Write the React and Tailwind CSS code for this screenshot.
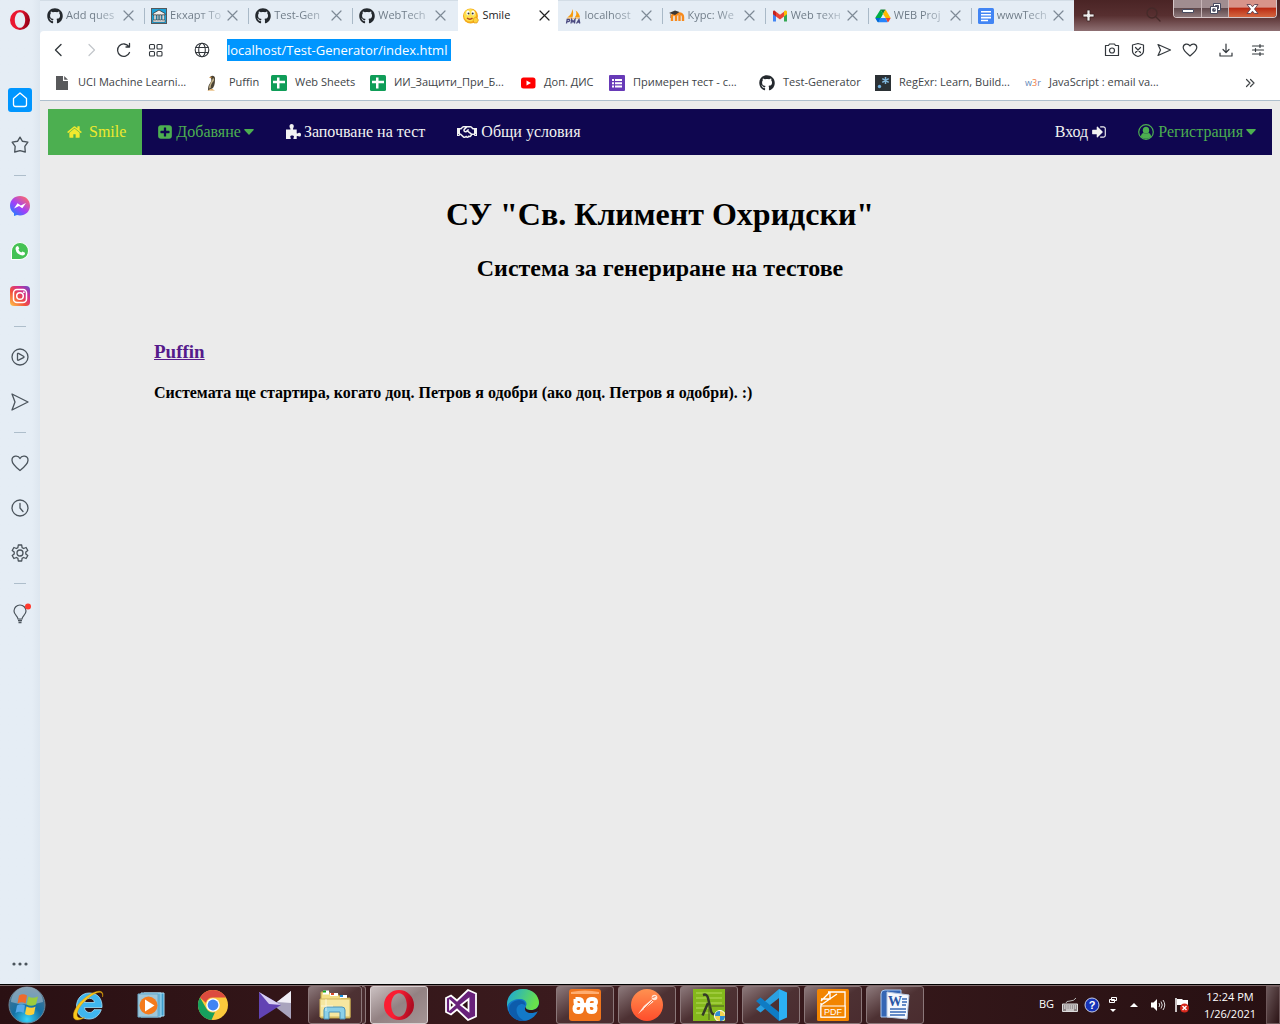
import React from "react";
import { FaGithub, FaRegHandshake } from "react-icons/fa";

/* ---------- helpers ---------- */

function Line({ size = 16, box = 16, w = 1, className = "", children }) {
  return (
    <svg
      width={size}
      height={size}
      viewBox={`0 0 ${box} ${box}`}
      fill="none"
      stroke="currentColor"
      strokeWidth={w}
      strokeLinecap="round"
      strokeLinejoin="round"
      className={"shrink-0 " + className}
      aria-hidden="true"
    >
      {children}
    </svg>
  );
}

function Pic({ w = 16, h = 16, vw = 16, vh = 16, children }) {
  return (
    <svg width={w} height={h} viewBox={`0 0 ${vw} ${vh}`} className="shrink-0" aria-hidden="true">
      {children}
    </svg>
  );
}

/* ---------- favicons ---------- */

const Github = () => <FaGithub size={16} className="shrink-0 text-[#24292e]" aria-hidden="true" />;

const Bank = () => (
  <Pic>
    <rect width="16" height="16" fill="#55595c" />
    <rect x="1" y="1" width="14" height="14" fill="#1ba1d8" />
    <path d="M2 5.500L8 2l6 3.500v1.500H2z" fill="#eee" stroke="#333" strokeWidth=".8" />
    <path d="M3 7h2v5H3zM6.200 7h1.400v5H6.200zM8.600 7H10v5H8.600zM11.200 7h2v5h-2zM2 12h12v2H2z" fill="#f4f4f4" stroke="#444" strokeWidth=".5" />
  </Pic>
);

const Smiley = () => (
  <Pic>
    <circle cx="7.500" cy="8" r="7.500" fill="#f5a91a" />
    <ellipse cx="7" cy="7.300" rx="6" ry="6.300" fill="#fde04e" />
    <ellipse cx="5" cy="5" rx="1.700" ry="2.400" fill="#fff" />
    <ellipse cx="10" cy="5" rx="1.700" ry="2.400" fill="#fff" />
    <circle cx="5.500" cy="5.600" r="1" fill="#333" />
    <circle cx="9.700" cy="5.600" r="1" fill="#333" />
    <path d="M4 10q3 2.500 5.500 0" stroke="#b4441c" strokeWidth="1.400" fill="none" />
    <path d="M11 10l2-1 2.500 3-1.500 3h-3l-1-3z" fill="#fdd23c" stroke="#db8a0c" strokeWidth=".6" />
  </Pic>
);

const Pma = () => (
  <Pic>
    <path d="M7 1C7.500 4 5.500 7.500 2 9.500h5.500C8.500 6 8.500 3 7 1zM10.500 2.500c1.500 2.500 1 5-1 7h5.500c-.5-3-2-5.500-4.500-7z" fill="#f89c0e" />
    <path d="M1.500 10.200h13l-1 .8h-11z" fill="#f4b766" />
    <g fill="none" stroke="#4b4a80" strokeWidth="1.300">
      <path d="M1.500 15.500l.7-4h1.800q1 .1.700 1.200t-1.500 1H2M6 15.500l.7-4 1.300 2.500 2-2.500-.5 4M11.500 15.500l2.500-4 .8 4M12.300 14.200h2" />
    </g>
  </Pic>
);

const Moodle = () => (
  <Pic>
    <path d="M3 13V8.500c0-2.500 4-2.500 4 0V13M7 8.500c0-2.500 1-3 3-3 2.500 0 4 1 4 3.500V13M10.500 7v6" fill="none" stroke="#f78a1d" strokeWidth="2.400" />
    <path d="M0 5l6-2.500L10.500 4 6 7z" fill="#3b3735" />
    <path d="M1.500 5v5" stroke="#8b8078" strokeWidth=".7" />
  </Pic>
);

const Gmail = () => (
  <Pic>
    <path d="M1 4v9.500h3V7.500z" fill="#4285f4" />
    <path d="M15 4v9.500h-3V7.500z" fill="#34a853" />
    <path d="M12 4v4.500l3-2.300V4c0-1.600-1.700-2-3-.9z" fill="#fbbc04" />
    <path d="M1 4v2.200l3 2.300V3.800L3 2.900C2 2.200 1 2.800 1 4z" fill="#c5221f" />
    <path d="M4 3.800v4.700l4 3 4-3V3.800l-4 3z" fill="#ea4335" />
  </Pic>
);

const Drive = () => (
  <Pic>
    <path d="M5.500 1.500h5L8 6z" fill="#188038" />
    <path d="M5.500 1.500L8 6l-4.500 8.300L.3 9.800z" fill="#00ac47" />
    <path d="M10.500 1.500L15.700 10h-5L8 6z" fill="#ffba00" />
    <path d="M.3 10h5l-1.800 4.300L2.500 14z" fill="#0066da" />
    <path d="M5.300 10h5.400l2 4.300H3.400z" fill="#2684fc" />
    <path d="M10.700 10h5l-2.300 4h-.8z" fill="#ea4335" />
  </Pic>
);

const Docs = () => (
  <Pic>
    <rect width="16" height="16" rx="1.500" fill="#4285f4" />
    <path d="M3 3h10v1.600H3zM3 5.900h10v1.600H3zM3 8.800h10v1.600H3zM3 11.700h7v1.600H3z" fill="#fff" />
  </Pic>
);

const Sheets = () => (
  <Pic>
    <rect width="16" height="16" rx="1.500" fill="#0f9d58" />
    <path d="M6 2.500h2.500v3.300H14v2.400H8.500v5.300H6V8.200H2V5.800h4z" fill="#fff" />
  </Pic>
);

const FileIcon = () => (
  <Pic>
    <path d="M2 1h7v5h5v9H2z" fill="#58595b" />
    <path d="M10.200 1L14 4.800h-3.800z" fill="#58595b" />
  </Pic>
);

const PuffinBird = () => (
  <Pic>
    <path d="M5 2c2-2 5-1.500 5 1.500-.1 3 .3 6-2 9.500l-5 2.500c0-4 .5-5.500 2.500-8C6.500 6 7 4 5 2z" fill="#4b4334" />
    <path d="M8 3c1.500.3 1.200 2 .7 3-2 2-3.200 4-3 7l-1.500.5C3.800 9.500 6.500 7 8 3z" fill="#c0b088" />
    <path d="M2 15.500h8l-3-1.500z" fill="#e0a24a" />
    <path d="M3.800 2.700L6.500 1.500v1.700z" fill="#c98b3a" />
  </Pic>
);

const YouTube = () => (
  <Pic>
    <rect x="1" y="2.500" width="14.500" height="11" rx="2.500" fill="#f00" />
    <path d="M6.500 5.500v5L11 8z" fill="#fff" />
  </Pic>
);

const Forms = () => (
  <Pic>
    <rect width="16" height="16" rx="1" fill="#673ab7" />
    <path d="M3 4h2v2H3zM6 4h7v2H6zM3 7.200h2v2H3zM6 7.200h7v2H6zM3 10.400h2v2H3zM6 10.400h7v2H6z" fill="#fff" />
  </Pic>
);

const Regexr = () => (
  <Pic>
    <rect width="16" height="16" fill="#2b3135" />
    <path d="M10.500 2v7M7.300 3.700l6.400 3.600M13.700 3.700l-6.400 3.600" stroke="#80b7dc" strokeWidth="1.500" />
    <circle cx="4.500" cy="11.500" r="1.700" fill="#70b0e0" />
  </Pic>
);

const W3r = () => (
  <span className="w-4 shrink-0 text-[9px] leading-4 text-[#6187b8]" aria-hidden="true">
    w<span className="text-[#f07a45]">3</span>r
  </span>
);

/* ---------- browser tabs ---------- */

const tabs = [
  { icon: Github, label: "Add ques", w: "basis-[104px]" },
  { icon: Bank, label: "Екхарт То", w: "basis-[104px]", sep: true },
  { icon: Github, label: "Test-Gen", w: "basis-[104px]", sep: true },
  { icon: Github, label: "WebTech", w: "basis-[104px]", sep: true },
  { icon: Smiley, label: "Smile", w: "basis-[100px]", active: true },
  { icon: Pma, label: "localhost", w: "basis-[103px]" },
  { icon: Moodle, label: "Курс: We", w: "basis-[103px]", sep: true },
  { icon: Gmail, label: "Web техн", w: "basis-[103px]", sep: true },
  { icon: Drive, label: "WEB Proj", w: "basis-[103px]", sep: true },
  { icon: Docs, label: "wwwTech", w: "basis-[103px]", sep: true },
];

function Tab({ icon: Icon, label, w, sep, active }) {
  return (
    <div
      className={
        "flex h-[31px] min-w-0 grow items-center text-[11px] " +
        w +
        (active ? " ml-0.5 bg-white pr-2 pl-[5px] text-[#222]" : " pr-2.5 text-[#7e8a96]")
      }
    >
      {!active && <span className={"mr-1.5 h-4 w-px shrink-0 " + (sep ? "bg-[#a9b9c7]" : "bg-transparent")} />}
      <Icon />
      <button
        className={
          "ml-[3px] min-w-0 flex-1 text-left whitespace-nowrap " +
          (active ? "" : "bg-linear-to-r from-[#6b7884] from-50% to-[#cbd6e0] bg-clip-text text-transparent")
        }
      >
        {label}
      </button>
      <button aria-label={"Close " + label} className="ml-0.5 shrink-0">
        <Line size={11} box={11} w={1.2}>
          <path d="M1 1l9 9M10 1l-9 9" />
        </Line>
      </button>
    </div>
  );
}

function WindowButtons() {
  return (
    <div className="flex h-[31px] w-[206px] shrink-0 items-start bg-linear-to-b from-[#4a2425] via-[#572f30] to-[#8e7073]">
      <button aria-label="New tab" className="mt-[9px] ml-2">
        <Pic w={13} h={13} vw={13} vh={13}>
          <path d="M5 1h3v4h4v3H8v4H5V8H1V5h4z" fill="#eee" stroke="#3a2222" strokeWidth=".8" />
        </Pic>
      </button>
      <button aria-label="Search tabs" className="mt-1.5 ml-[50px] text-[#452a29]">
        <Line w={1.3}>
          <circle cx="7" cy="7" r="5" />
          <path d="M11 11l4 4" />
        </Line>
      </button>
      <div className="mr-[3px] ml-auto flex h-[18px] w-[104px] overflow-hidden rounded-b-[4px] border border-t-0 border-[#d5c6c8]">
        <button aria-label="Minimize" className="flex w-7 items-center justify-center border-r border-[#c8b6b8] bg-linear-to-b from-[#a08d90] from-45% via-[#60494c] via-50% to-[#8e797c]">
          <Pic w={14} h={12} vw={14} vh={12}>
            <path d="M1.500 6.500h11v3h-11z" fill="#fff" stroke="#484b60" />
          </Pic>
        </button>
        <button aria-label="Restore" className="flex w-[27px] items-center justify-center border-r border-[#c8b6b8] bg-linear-to-b from-[#a08d90] from-45% via-[#60494c] via-50% to-[#8e797c]">
          <Pic w={13} h={13} vw={13} vh={13}>
            <path d="M4.500 1.500h7v7h-7zM6.500 3.500v3h3v-3z" fill="#fff" fillRule="evenodd" stroke="#484b60" />
            <path d="M1.500 4.500h7v7h-7zM3.800 6.800v2.400h2.400V6.800z" fill="#fff" fillRule="evenodd" stroke="#484b60" />
          </Pic>
        </button>
        <button aria-label="Close window" className="flex flex-1 items-center justify-center bg-linear-to-b from-[#d8948a] from-40% via-[#bb2b14] via-50% to-[#d4653f]">
          <Pic w={13} h={12} vw={13} vh={12}>
            <path d="M1 1.500h3.500l2 2.300 2-2.300H12L8.500 6l3.500 4.500H8.500l-2-2.300-2 2.300H1L4.500 6z" fill="#fff" stroke="#5b4150" strokeWidth=".9" />
          </Pic>
        </button>
      </div>
    </div>
  );
}

/* ---------- address bar and bookmarks ---------- */

function Toolbar() {
  return (
    <div className="flex h-[38px] items-center rounded-tl-sm bg-white pr-3.5 pl-3 text-[#33383d]">
      <button aria-label="Back" className="w-8 shrink-0">
        <Line w={1.4}>
          <path d="M9 2.500L3.500 8 9 13.500" />
        </Line>
      </button>
      <button aria-label="Forward" className="w-8 shrink-0 text-[#c2c6ca]">
        <Line w={1.2}>
          <path d="M5 2.500L10.500 8 5 13.500" />
        </Line>
      </button>
      <button aria-label="Reload" className="w-8 shrink-0">
        <Line w={1.3}>
          <path d="M13.500 10.500a6.200 6.200 0 1 1-.6-5.800M13.500 1.500v3.500H10" />
        </Line>
      </button>
      <button aria-label="Speed dial" className="w-12 shrink-0">
        <Line w={1.1}>
          <rect x="1.500" y="2.500" width="5" height="4.500" rx="1" />
          <rect x="9" y="2.500" width="5" height="4.500" rx="1" />
          <rect x="1.500" y="9.500" width="5" height="4.500" rx="1" />
          <rect x="9" y="9.500" width="5" height="4.500" rx="1" />
        </Line>
      </button>
      <button aria-label="Site information" className="w-[31px] shrink-0">
        <Line w={1.1} className="-ml-0.5">
          <circle cx="8" cy="8" r="6.800" />
          <ellipse cx="8" cy="8" rx="3.300" ry="6.800" />
          <path d="M1.800 5.500h12.400M1.800 10.500h12.400" />
        </Line>
      </button>
      <div className="min-w-0 flex-1">
        <input
          aria-label="Address"
          defaultValue="localhost/Test-Generator/index.html"
          className="block h-[22px] w-[224px] bg-[#0096ff] text-[13px] text-white outline-none"
        />
      </div>
      <div className="flex items-center gap-2.5">
        <button aria-label="Snapshot">
          <Line w={1.2}>
            <path d="M1.500 3.500h3l1-1.500h5l1 1.500h3v10h-13z" />
            <circle cx="8" cy="8.500" r="2.500" />
          </Line>
        </button>
        <button aria-label="Ad blocker">
          <Line w={1.2}>
            <path d="M8 1.500l5.500 1.500v6c0 3-2.500 4.500-5.500 5.500-3-1-5.500-2.500-5.500-5.500V3zM5.500 5.500l5 5M10.500 5.500l-5 5" />
          </Line>
        </button>
        <button aria-label="Send to My Flow">
          <Line w={1.2}>
            <path d="M2 2.500L14.500 8 2 13.500 4.500 8z" />
          </Line>
        </button>
        <button aria-label="Add to bookmarks">
          <Line w={1.2}>
            <path d="M8 14C4 10.500 1.200 8.500 1.200 5.500c0-3.800 5-4.700 6.800-1.500 1.800-3.200 6.800-2.300 6.800 1.500 0 3-2.800 5-6.800 8.500z" />
          </Line>
        </button>
        <button aria-label="Downloads" className="ml-2.5">
          <Line w={1.2}>
            <path d="M8 2v8M5 7.500L8 10.500l3-3M2 11v3h12v-3" />
          </Line>
        </button>
        <button aria-label="Easy setup" className="ml-1.5">
          <Line w={1.2}>
            <path d="M2.500 4h11M2.500 8h11M2.500 12h11M10 2.500v3M5.500 6.500v3M10 10.500v3" />
          </Line>
        </button>
      </div>
    </div>
  );
}

const bookmarks = [
  { icon: FileIcon, label: "UCI Machine Learni...", w: "w-[151px]" },
  { icon: PuffinBird, label: "Puffin", w: "w-[66px]" },
  { icon: Sheets, label: "Web Sheets", w: "w-[99px]" },
  { icon: Sheets, label: "ИИ_Защити_При_Б...", w: "w-[150px]" },
  { icon: YouTube, label: "Доп. ДИС", w: "w-[89px]" },
  { icon: Forms, label: "Примерен тест - с...", w: "w-[150px]" },
  { icon: Github, label: "Test-Generator", w: "w-[116px]" },
  { icon: Regexr, label: "RegExr: Learn, Build...", w: "w-[150px]" },
  { icon: W3r, label: "JavaScript : email va...", w: "w-[150px]" },
];

function Bookmarks() {
  return (
    <div className="flex h-8 items-center border-b border-[#aebfcd] bg-white pb-1 pl-3.5 text-[11px] text-[#404447]">
      <nav className="flex min-w-0 flex-1 overflow-hidden" aria-label="Bookmarks">
        {bookmarks.map(({ icon: Icon, label, w }) => (
          <a key={label} href="#" className={"flex shrink-0 items-center gap-2 whitespace-nowrap " + w}>
            <Icon />
            {label}
          </a>
        ))}
      </nav>
      <button aria-label="More bookmarks" className="mr-[22px]">
        <Line w={1.2}>
          <path d="M4.500 4.500L8 8l-3.500 3.500M8.500 4.500L12 8l-3.500 3.500" />
        </Line>
      </button>
    </div>
  );
}

/* ---------- side bar ---------- */

function SideItem({ label, children }) {
  return (
    <button aria-label={label} className="flex h-[45px] w-full items-center justify-center text-[#4b545c]">
      {children}
    </button>
  );
}

const Divider = () => (
  <div className="flex h-4 w-full items-center justify-center">
    <div className="h-px w-3 bg-[#aebecb]" />
  </div>
);

function OperaRing({ size, id, from, to }) {
  return (
    <Pic w={size} h={size} vw={30} vh={30}>
      <defs>
        <linearGradient id={id} x1="0" y1="0" x2="1" y2=".25">
          <stop offset=".5" stopColor={from} />
          <stop offset="1" stopColor={to} />
        </linearGradient>
      </defs>
      <path
        fillRule="evenodd"
        d="M15 0a15 15 0 1 0 0 30a15 15 0 0 0 0-30zM15 3.200c4.600 0 7.800 5.300 7.800 11.800s-3.200 11.800-7.800 11.800S7.200 21.500 7.200 15 10.400 3.200 15 3.200z"
        fill={`url(#${id})`}
      />
    </Pic>
  );
}

function Sidebar() {
  return (
    <aside className="flex w-10 shrink-0 flex-col items-center bg-linear-to-r from-[#e5edf5] from-80% to-[#dde6ef]">
      <button aria-label="Opera menu" className="mt-2.5 mb-[47px]">
        <OperaRing size={20} id="opera-menu" from="#ea1730" to="#9c0018" />
      </button>
      <SideItem label="Speed Dial">
        <span className="flex size-6 items-center justify-center rounded-[3px] bg-[#0096ff] text-white">
          <Line w={1.3}>
            <path d="M1.500 6.500L8 1l6.500 5.500v6q0 2-2 2h-9q-2 0-2-2z" />
          </Line>
        </span>
      </SideItem>
      <SideItem label="Bookmarks">
        <Line size={18} w={1.2}>
          <path d="M8 1l2.200 3.700 4.800.8-2.700 3.800.4 4.900L8 13l-4.700 1.200.4-4.900L1 5.500l4.800-.8z" />
        </Line>
      </SideItem>
      <Divider />
      <SideItem label="Messenger">
        <Pic w={20} h={20} vw={20} vh={20}>
          <defs>
            <linearGradient id="msg" x1="0" y1="1" x2=".8" y2="0">
              <stop offset="0" stopColor="#0090ff" />
              <stop offset=".5" stopColor="#a040fa" />
              <stop offset="1" stopColor="#ff6a68" />
            </linearGradient>
          </defs>
          <path d="M10 0c5.700 0 10 4.200 10 9.700s-4.300 9.700-10 9.700l-3-.4-3 1v-2.700C1.500 15.500 0 12.900 0 9.700 0 4.200 4.300 0 10 0z" fill="url(#msg)" />
          <path d="M4 12.500l3.500-5.300 3.300 2.400L16 7l-3.700 5.300-3.200-2.400z" fill="#fff" />
        </Pic>
      </SideItem>
      <SideItem label="WhatsApp">
        <span className="flex size-[18px] items-center justify-center rounded-full rounded-bl-sm border border-white bg-[#45c254] text-white">
          <Pic w={12} h={12} vw={12} vh={12}>
            <path d="M2.500 1.500L4 1l1.300 2.500-.9 1.200q1 2 2.900 2.800l1.200-1L11 7.700q.2 2.500-2.300 2.800Q2.500 9.800 1.500 4q0-1.700 1-2.500z" fill="#fff" />
          </Pic>
        </span>
      </SideItem>
      <SideItem label="Instagram">
        <Pic w={20} h={20} vw={20} vh={20}>
          <defs>
            <linearGradient id="ig" x1="0" y1="1" x2="1" y2="0">
              <stop offset="0" stopColor="#ffc84a" />
              <stop offset=".4" stopColor="#f2503c" />
              <stop offset=".7" stopColor="#cf2e92" />
              <stop offset="1" stopColor="#5b4fd0" />
            </linearGradient>
          </defs>
          <rect width="20" height="20" rx="4" fill="url(#ig)" />
          <rect x="3.500" y="3.500" width="13" height="13" rx="3.500" fill="none" stroke="#fff" strokeWidth="1.500" />
          <circle cx="10" cy="10" r="3.300" fill="none" stroke="#fff" strokeWidth="1.500" />
          <circle cx="13.900" cy="6.200" r=".9" fill="#fff" />
        </Pic>
      </SideItem>
      <Divider />
      <SideItem label="Player">
        <Line size={18} box={18} w={1.3}>
          <circle cx="9" cy="9" r="8" />
          <path d="M6.500 6q0-1 1-.6l5 2.800q1 .8 0 1.500l-5 2.500q-1 .4-1-.6z" />
        </Line>
      </SideItem>
      <SideItem label="My Flow">
        <Line size={18} box={18} w={1.3}>
          <path d="M1 1L17 9 1 17 4 9z" />
        </Line>
      </SideItem>
      <Divider />
      <SideItem label="Favorites">
        <Line size={18} box={18} w={1.3}>
          <path d="M9 16.500C4 12.500 1 9.500 1 6.200c0-4.700 6.200-5.500 8-1.600 1.800-3.900 8-3.100 8 1.600 0 3.300-3 6.300-8 10.300z" />
        </Line>
      </SideItem>
      <SideItem label="History">
        <Line size={18} box={18} w={1.3}>
          <circle cx="9" cy="9" r="8" />
          <path d="M9 4.500V9l3 3.500" />
        </Line>
      </SideItem>
      <SideItem label="Settings">
        <Line size={18} box={18} w={1.3}>
          <path d="M7.300 1h3.400l.4 2.600 1.500.9 2.500-1 1.700 3-2 1.600v1.800l2 1.600-1.700 3-2.500-1-1.500.9-.4 2.600H7.300l-.4-2.600-1.500-.9-2.500 1-1.700-3 2-1.600V8.100l-2-1.600 1.700-3 2.500 1 1.500-.9z" />
          <circle cx="9" cy="9" r="3" />
        </Line>
      </SideItem>
      <Divider />
      <SideItem label="Tips">
        <Pic w={24} h={22} vw={24} vh={22}>
          <g fill="none" stroke="#4b545c" strokeWidth="1.200">
            <path d="M10 16c0-3-4-4-4-8a6 6 0 0 1 12 0c0 4-4 5-4 8z" />
            <path d="M10 17.500h4M10.500 19.500h3" strokeWidth="1.500" />
          </g>
          <circle cx="20" cy="3.500" r="3" fill="#ff3a2e" />
        </Pic>
      </SideItem>
      <div className="mt-auto pt-4">
        <button aria-label="Sidebar setup" className="flex h-10 w-full items-center justify-center">
          <Pic w={18} h={4} vw={18} vh={4}>
            <g fill="#4b545c">
              <circle cx="3" cy="2" r="1.600" />
              <circle cx="9" cy="2" r="1.600" />
              <circle cx="15" cy="2" r="1.600" />
            </g>
          </Pic>
        </button>
      </div>
    </aside>
  );
}

/* ---------- page ---------- */

function Glyph({ d, w = 16 }) {
  return (
    <svg width={w} height={16} viewBox="0 0 1792 1792" fill="currentColor" aria-hidden="true">
      <path d={d} />
    </svg>
  );
}

const HOME =
  "M1472 992v480q0 26-19 45t-45 19h-384v-384h-256v384h-384q-26 0-45-19t-19-45v-480q0-1 .5-3t.5-3l575-474 575 474q1 2 1 6zm223-69l-62 74q-8 9-21 11h-3q-13 0-21-7l-692-577-692 577q-12 8-24 7-13-2-21-11l-62-74q-8-10-7-23.500t11-21.500l719-599q32-26 76-26t76 26l244 204v-195q0-14 9-23t23-9h192q14 0 23 9t9 23v408l219 182q10 8 11 21.500t-7 23.500z";
const PLUS =
  "M1408 960v-128q0-26-19-45t-45-19h-320v-320q0-26-19-45t-45-19h-128q-26 0-45 19t-19 45v320h-320q-26 0-45 19t-19 45v128q0 26 19 45t45 19h320v320q0 26 19 45t45 19h128q26 0 45-19t19-45v-320h320q26 0 45-19t19-45zm256-544v960q0 119-84.500 203.500t-203.500 84.500h-960q-119 0-203.500-84.500t-84.500-203.500v-960q0-119 84.500-203.500t203.500-84.500h960q119 0 203.500 84.500t84.500 203.500z";
const SIGN_IN =
  "M1312 896q0 26-19 45l-544 544q-19 19-45 19t-45-19-19-45v-288h-448q-26 0-45-19t-19-45v-384q0-26 19-45t45-19h448v-288q0-26 19-45t45-19 45 19l544 544q19 19 19 45zm352-352v704q0 119-84.500 203.500t-203.500 84.500h-320q-13 0-22.500-9.500t-9.500-22.500q-1-4-1-20t-.5-26.500 3-23.500 10-19.500 20.500-6.500h320q66 0 113-47t47-113v-704q0-66-47-113t-113-47h-312l-11.500-1-11.500-3-8-5.500-7-9-2-13.500q-1-4-1-20t-.5-26.500 3-23.500 10-19.500 20.500-6.500h320q119 0 203.500 84.500t84.500 203.500z";

const Puzzle = () => (
  <svg width="15" height="16" viewBox="0 0 15 16" fill="currentColor" className="-mr-px" aria-hidden="true">
    <path d="M0 5.500h4.300C5 4.700 3.500 3.800 3.500 2.200c0-2.900 4.300-2.900 4.300 0 0 1.600-1.300 2.500-.6 3.300h3.500v3.700c.9.800 1.700-.4 2.800-.4 2 0 2 3.700 0 3.700-1.100 0-1.900-1-2.800-.3V15H7.600c-.7-.7.400-1.600.4-2.300 0-1.700-3.800-1.700-3.800 0 0 .7 1.100 1.600.4 2.300H0z" />
  </svg>
);

const UserCircle = () => (
  <svg width="16" height="16" viewBox="0 0 16 16" fill="currentColor" aria-hidden="true">
    <circle cx="8" cy="8" r="7.300" fill="none" stroke="currentColor" strokeWidth="1.200" />
    <ellipse cx="8" cy="6.300" rx="3.200" ry="3.500" />
    <path d="M2.800 12.500c.5-2.500 1.500-3.500 3-3.500 1.300 1 3.100 1 4.400 0 1.500 0 2.500 1 3 3.500-3 2.900-7.400 2.900-10.400 0z" />
  </svg>
);

const Caret = () => (
  <svg width="10" height="6" viewBox="0 0 10 6" fill="currentColor" className="-ml-px" aria-hidden="true">
    <path d="M.8 0h8.400q.8.200.5 1L5.500 5.500q-.5.400-1 0L.3 1Q0 .2.800 0z" />
  </svg>
);

function PageNav() {
  const item = "flex h-[46px] items-center gap-1 px-4 whitespace-nowrap ";
  return (
    <nav className="flex flex-wrap bg-[#0f0650] text-[16px] text-[#f2f2f2]">
      <a href="#" className={item + "bg-[#4caf50] text-[#f0e92e]"}>
        <span className="flex w-[21px] justify-center">
          <Glyph d={HOME} w={17} />
        </span>
        Smile
      </a>
      <button className={item + "text-[#4caf50]"}>
        <span className="-mx-px flex">
          <Glyph d={PLUS} />
        </span>
        Добавяне
        <Caret />
      </button>
      <a href="#" className={item}>
        <Puzzle />
        Започване на тест
      </a>
      <a href="#" className={item}>
        <FaRegHandshake size={20} aria-hidden="true" />
        Общи условия
      </a>
      <div className="ml-auto flex">
        <a href="#" className={item}>
          Вход
          <span className="-mx-px flex">
            <Glyph d={SIGN_IN} />
          </span>
        </a>
        <button className={item + "text-[#4caf50]"}>
          <UserCircle />
          Регистрация
          <Caret />
        </button>
      </div>
    </nav>
  );
}

function Page() {
  return (
    <main className="flex-1 bg-[#ebebeb] p-2 font-['Liberation_Serif',serif] text-black">
      <PageNav />
      <header className="pt-[39px] text-center font-bold">
        <h1 className="text-[32px] leading-10">СУ "Св. Климент Охридски"</h1>
        <h2 className="mt-5 text-[24px] leading-7">Система за генериране на тестове</h2>
      </header>
      <section className="mt-[58px] ml-[106px] font-bold">
        <h3 className="text-[19px] leading-6">
          <a href="#" className="text-[#551a8b] underline">
            Puffin
          </a>
        </h3>
        <h4 className="mt-[19px] text-[16px] leading-5">
          Системата ще стартира, когато доц. Петров я одобри (ако доц. Петров я одобри). :)
        </h4>
      </section>
    </main>
  );
}

/* ---------- task bar ---------- */

const IE = () => (
  <Pic w={32} h={34} vw={32} vh={34}>
    <path d="M29 19.500H11.500c.5 6 7.500 6.500 9.500 2.200h7.300C26 28 21.500 31 16 31 8.500 31 3.500 26 3.500 18.500S8.500 5 16.500 5 29.500 10.500 29 19.500zM11.500 14.500h10c-.8-5.500-9-5.700-10 0z" fill="#3fb5ee" stroke="#a5e2fb" strokeWidth=".8" />
    <path d="M29.500 9c2-7-4.500-7.500-13.500-2C6 13-3 26 1.500 31c2 2 7 .5 10-1.500-4.500 1.200-7.500.5-7.500-3C4 17 23 2 28 4.500c1.500.8 1.800 2.500 1.500 4.500z" fill="#f9c81c" stroke="#d89808" strokeWidth=".5" />
  </Pic>
);

const MediaPlayer = () => (
  <Pic w={30} h={28} vw={30} vh={28}>
    <path d="M8 2h20v23H8z" fill="#3f9ccb" stroke="#a7dbf2" />
    <path d="M5 2h20v24H5z" fill="#63b4dc" stroke="#a7dbf2" />
    <path d="M2 3h20v23H2z" fill="#9fc6d8" stroke="#6aa8c8" />
    <circle cx="12.500" cy="14.500" r="9" fill="#f47a1c" />
    <path d="M9 8.500v12l9.500-6z" fill="#fff" />
  </Pic>
);

const Chrome = () => (
  <Pic w={30} h={30} vw={30} vh={30}>
    <circle cx="15" cy="15" r="15" fill="#fbc93c" />
    <path d="M15 0a15 15 0 0 1 13 7.500H15a7.500 7.500 0 0 0-7.200 5.200L2 7.500A15 15 0 0 1 15 0z" fill="#dc4b3e" />
    <path d="M2 7.500l6.500 11.300A7.500 7.500 0 0 0 17 22.200L13.500 30A15 15 0 0 1 2 7.500z" fill="#17a05d" />
    <circle cx="15" cy="15" r="6.800" fill="#fff" />
    <circle cx="15" cy="15" r="5.400" fill="#4285f4" />
  </Pic>
);

const Km = () => (
  <Pic w={32} h={28} vw={32} vh={28}>
    <path d="M32 0v28L14 14z" fill="#a9a4bd" />
    <path d="M32 0v12L18 11z" fill="#f0eef5" />
    <path d="M0 1l22 13L0 28z" fill="#6243b3" />
    <path d="M0 1l22 13-12-1z" fill="#d9d0f2" />
  </Pic>
);

const Explorer = () => (
  <Pic w={34} h={31} vw={34} vh={31}>
    <path d="M3 3h8l2 3h8l2 3h9v20H3z" fill="#f3de85" stroke="#bb9f45" />
    <path d="M5 1.500h6v4H5zM12 4h8v3h-8zM22 6h7v3h-7z" fill="#fff" />
    <path d="M5 1.500h3v2H5z" fill="#19a51b" />
    <path d="M13 4h3v2h-3z" fill="#d94a28" />
    <path d="M22 6h3v2h-3z" fill="#1590dd" />
    <path d="M2 10h30v18H2z" fill="#f6e7a0" stroke="#d0b45b" />
    <path d="M6 30v-9q0-3 3-3h15q3 0 3 3v9h-5v-7H11v7z" fill="#8bd0e8" stroke="#4a93bb" />
    <path d="M8 10v12M3 17h12" stroke="#fff" opacity=".6" />
  </Pic>
);

const OperaBig = () => <OperaRing size={30} id="opera-task" from="#fa1d32" to="#b00d22" />;

const VisualStudio = () => (
  <Pic w={32} h={32} vw={32} vh={32}>
    <path d="M23 1l8 3.500v23L23 31 12 20.500l-6 5L1 23V9l5-2.500 6 5z" fill="#68217a" stroke="#fff" strokeWidth="1.800" />
    <path d="M5 12l4.500 4L5 20zM23.500 10v12L16 16z" fill="#2d1216" stroke="#fff" strokeWidth="1.800" />
  </Pic>
);

const Edge = () => (
  <Pic w={32} h={32} vw={32} vh={32}>
    <defs>
      <linearGradient id="edg" x1="0" y1="0" x2="1" y2=".3">
        <stop offset="0" stopColor="#18a5df" />
        <stop offset="1" stopColor="#68e14b" />
      </linearGradient>
    </defs>
    <circle cx="16" cy="16" r="16" fill="#1379c9" />
    <path d="M0 16C0 6 7 0 16 0c10 0 16 7 16 13.500 0 5-4 7.500-8 7.500-4.500 0-6-2-5-4 2-4-2-7-6-7C7 10 1 13 0 18z" fill="url(#edg)" />
    <path d="M18.500 17c-2-4-9-2-9 4 0 5 4 10 9 10.700C8 33.500 2 26 2 20c0-8 12-12 16-6z" fill="#0d5cab" />
    <path d="M18.500 17c-2.500 6 4 9.500 13 5l1-3v-6c-1 6-4 8-8.500 8s-6-2-5.500-4z" fill="#301619" />
  </Pic>
);

const Xampp = () => (
  <Pic w={32} h={32} vw={32} vh={32}>
    <rect width="32" height="32" rx="3" fill="#f0741c" />
    <path d="M2 3q14-3 28 0v2H2z" fill="#ffad70" />
    <g fill="none" stroke="#fff" strokeWidth="4">
      <path d="M6.500 10H9q4 0 4 3t3 3 3-3 4-3q4 0 4 3t-4 3H9" />
      <path d="M6.500 10v3q0 3 3 3-4 0-4 3.500t4 3.500q3.500 0 3.500-3.500T16 16t3 3.500 3.500 3.500q4 0 4-3.500t-4-3.500" />
    </g>
  </Pic>
);

const Postman = () => (
  <Pic w={32} h={32} vw={32} vh={32}>
    <defs>
      <linearGradient id="pm" x1="0" y1="0" x2="0" y2="1">
        <stop offset="0" stopColor="#ff9150" />
        <stop offset="1" stopColor="#ff4d2b" />
      </linearGradient>
    </defs>
    <circle cx="16" cy="16" r="16" fill="url(#pm)" />
    <circle cx="23.500" cy="8.500" r="2.800" fill="#ffe6d8" />
    <path d="M20.500 10.500l2 2.300-8 6-7.500 6.200 5.800-8z" fill="#ffe8dc" />
    <path d="M22 11l-9 9M21.500 8.500l3-1" stroke="#f26b3a" />
  </Pic>
);

const Lambda = () => (
  <Pic w={32} h={32} vw={32} vh={32}>
    <rect width="32" height="32" fill="#84b81c" />
    <path d="M3 4h26M3 9h26M3 14h26M3 19h14M3 24h14" stroke="#a5d046" strokeWidth="1.500" />
    <path d="M10 6q4-1.500 5 3l3 13q1 4 4 3M15 14L9.500 26.500" fill="none" stroke="#333a28" strokeWidth="2.500" />
    <path d="M16 31V17h15" fill="none" stroke="#4c5b25" />
    <circle cx="27" cy="27" r="5.500" fill="#f3d552" stroke="#fff" />
    <path d="M27 22v5h-5q0-5 5-5zM27 27h5q0 5-5 5z" fill="#2e8ed4" />
  </Pic>
);

const VsCode = () => (
  <Pic w={32} h={32} vw={32} vh={32}>
    <path d="M24 0v9L5.500 23.500 1 20z" fill="#2ba0e0" />
    <path d="M24 32v-9L5.500 8.500 1 12z" fill="#0f7cc4" />
    <path d="M24 0l8 3.500v25L24 32z" fill="#2cb0f3" />
  </Pic>
);

const Pdf = () => (
  <Pic w={32} h={32} vw={32} vh={32}>
    <rect width="32" height="32" rx="1.500" fill="#f28500" />
    <path d="M11 3h17v25H4V14M4 12l9-9M4 16L20 5M13 3v7H4" fill="none" stroke="#fff" strokeWidth="1.300" />
    <rect x="4" y="17" width="24" height="11" fill="#f28500" stroke="#fff" />
    <text x="16" y="26" fontSize="9" fill="#fff" textAnchor="middle" fontFamily="Liberation Sans, sans-serif">
      PDF
    </text>
  </Pic>
);

const Word = () => (
  <Pic w={32} h={32} vw={32} vh={32}>
    <path d="M2 5q0-4 4-4h16v27H2z" fill="#3566b4" stroke="#a9c7ee" />
    <path d="M8 3l22 3-2 24-20-2z" fill="#f5f8fd" stroke="#b8c8e0" />
    <text x="9" y="17" fontSize="14" fontWeight="bold" fill="#2b57a5" fontFamily="Liberation Serif, serif">
      W
    </text>
    <path d="M23 10h5M23 13h5M23 16h4M11 20h16M11 23h16M11 26h15" stroke="#3566b4" strokeWidth="1.500" />
  </Pic>
);

const apps = [
  { name: "Internet Explorer", icon: IE },
  { name: "Media Player", icon: MediaPlayer },
  { name: "Chrome", icon: Chrome },
  { name: "KMPlayer", icon: Km },
  { name: "Explorer", icon: Explorer, open: true, stacked: true },
  { name: "Opera", icon: OperaBig, open: true, current: true },
  { name: "Visual Studio", icon: VisualStudio },
  { name: "Edge", icon: Edge },
  { name: "XAMPP", icon: Xampp, open: true },
  { name: "Postman", icon: Postman, open: true },
  { name: "Notepad", icon: Lambda, open: true },
  { name: "VS Code", icon: VsCode, open: true },
  { name: "PDF", icon: Pdf, open: true },
  { name: "Word", icon: Word, open: true },
];

function AppButton({ name, icon: Icon, open, current, stacked }) {
  const look = current
    ? "border-[#d9cfd0] bg-linear-to-br from-[#cbc0c1] via-[#938283] to-[#a49495]"
    : open
      ? "border-[#8b7779] bg-linear-to-br from-[#8c797b] via-[#4d3133] to-[#4a2c2f]"
      : "border-transparent";
  return (
    <div className="flex h-[38px] w-[58px]">
      <button aria-label={name} className={"flex flex-1 items-center justify-center rounded-[3px] border " + look}>
        <Icon />
      </button>
      {stacked && <span className="w-1 rounded-r-[3px] border border-l-0 border-[#8b7779] bg-[#4a2c2f]" />}
    </div>
  );
}

function Taskbar() {
  return (
    <footer className="flex h-10 shrink-0 items-center border-t border-black bg-linear-to-r from-[#2a1013] via-[#3d1c1f] via-50% to-[#271012] text-white shadow-[inset_0_1px_0_#7d6869]">
      <button aria-label="Start" className="mr-3.5 ml-2">
        <Pic w={38} h={38} vw={38} vh={38}>
          <defs>
            <radialGradient id="orb" cx=".5" cy=".9" r=".9">
              <stop offset="0" stopColor="#38d4f8" />
              <stop offset=".45" stopColor="#1470a4" />
              <stop offset="1" stopColor="#52738c" />
            </radialGradient>
          </defs>
          <circle cx="19" cy="19" r="18" fill="url(#orb)" stroke="#6d8494" />
          <path d="M3 16a16 15 0 0 1 32 0q-16 5-32 0z" fill="#c8d8e2" opacity=".45" />
          <path d="M11 9.500q4-2.500 8 0l-1.500 8q-4-2.500-8 0z" fill="#ee6a2c" />
          <path d="M20.500 10.500q4 2.500 9.500 0L28 18.500q-5 2.500-9.500 0z" fill="#9ccc3e" />
          <path d="M9 19.500q4-2.500 8 0l-1.500 7.500q-4-2.500-8 0z" fill="#54a8ea" />
          <path d="M18.500 20.500q5 2.500 9 0L26 28q-5 2.500-9 0z" fill="#fccf3a" />
        </Pic>
      </button>
      <div className="flex gap-1">
        {apps.map((a) => (
          <AppButton key={a.name} {...a} />
        ))}
      </div>
      <div className="ml-auto flex items-center">
        <span className="mr-2 text-[11px]">BG</span>
        <Pic w={16} h={16} vw={16} vh={16}>
          <path d="M.5 7h15v7.500H.5z" fill="#8d8586" stroke="#ddd" />
          <path d="M2 9h12M2 11h12" stroke="#fff" strokeDasharray="1.500 .7" />
          <path d="M4 13h8" stroke="#fff" />
          <path d="M4 6q0-2 4-2t6-3" stroke="#bbb" fill="none" />
        </Pic>
        <span className="ml-1.5">
          <Pic>
            <circle cx="8" cy="8" r="7" fill="#1634b8" stroke="#c9cfe8" />
            <text x="8" y="12" fontSize="11" fontWeight="bold" fill="#fff" textAnchor="middle" fontFamily="Liberation Sans, sans-serif">
              ?
            </text>
          </Pic>
        </span>
        <span className="ml-2">
          <Pic w={10} h={18} vw={10} vh={18}>
            <path d="M3.500 1.500h5v3h-5zM1.500 3.500h5v3h-5z" fill="#321619" stroke="#fff" />
            <path d="M2 13h6l-3 3z" fill="#fff" />
          </Pic>
        </span>
        <button aria-label="Show hidden icons" className="ml-3">
          <Pic w={8} h={5} vw={8} vh={5}>
            <path d="M0 5h8L4 1z" fill="#fff" />
          </Pic>
        </button>
        <button aria-label="Volume" className="ml-3">
          <Pic>
            <path d="M1 5.500h2.500L7 2v12l-3.500-3.500H1z" fill="#fff" />
            <path d="M9 6q1.500 2 0 4M11 4.500q2.500 3.500 0 7M13 3q3.500 5 0 10" stroke="#ddd" fill="none" />
          </Pic>
        </button>
        <button aria-label="Action center" className="ml-2">
          <Pic>
            <path d="M2 1v14" stroke="#fff" strokeWidth="1.500" />
            <path d="M3 2h5l1 1h5v6H9L8 8H3z" fill="#fff" />
            <circle cx="10.500" cy="11" r="4.500" fill="#d8281c" />
            <path d="M8.500 9l4 4M12.500 9l-4 4" stroke="#fff" strokeWidth="1.400" />
          </Pic>
        </button>
        <div className="mr-1.5 ml-2.5 w-[60px] text-center text-[11px] leading-[17px] whitespace-nowrap">
          12:24 PM
          <br />
          1/26/2021
        </div>
        <button aria-label="Show desktop" className="h-[38px] w-3.5 border border-[#6d5759] bg-linear-to-br from-[#6b585a] to-[#2c1416]" />
      </div>
    </footer>
  );
}

export default function App() {
  return (
    <div className="flex min-h-screen flex-col bg-[#e5edf5] font-['Open_Sans','Noto_Sans',sans-serif] text-[12px]">
      <div className="flex flex-1">
        <Sidebar />
        <div className="flex min-w-0 flex-1 flex-col">
          <div className="flex h-[31px] shadow-[inset_0_1px_0_#d3dde6]">
            <div className="flex min-w-0 flex-1">
              {tabs.map((t, i) => (
                <Tab key={i} {...t} />
              ))}
            </div>
            <WindowButtons />
          </div>
          <Toolbar />
          <Bookmarks />
          <Page />
        </div>
      </div>
      <Taskbar />
    </div>
  );
}
